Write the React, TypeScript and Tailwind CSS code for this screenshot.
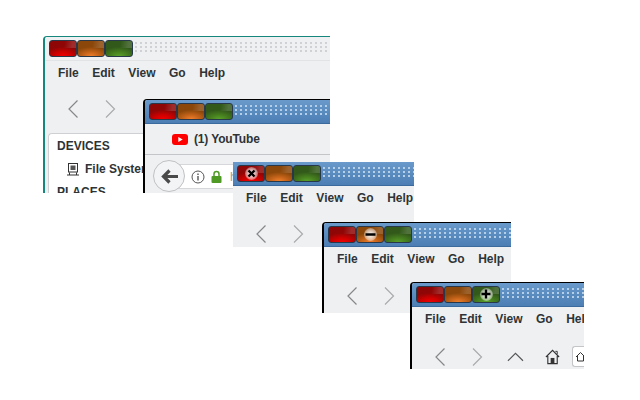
import type { ReactNode } from 'react';

type Hover = 'close' | 'min' | 'max' | null;

function TitleButton({ color, glyph }: { color: 'red' | 'orange' | 'green'; glyph?: ReactNode }) {
  const colors = {
    red: 'bg-[radial-gradient(ellipse_70%_60%_at_50%_100%,#f00000_0%,#d00000_45%,#8f0606_100%)]',
    orange: 'bg-[radial-gradient(ellipse_70%_60%_at_50%_100%,#ee7f2c_0%,#c4631a_45%,#8b4709_100%)]',
    green: 'bg-[radial-gradient(ellipse_70%_60%_at_50%_100%,#5aa02a_0%,#47801f_45%,#32591a_100%)]',
  };
  return (
    <div className={`relative flex h-[17px] w-[28px] items-center justify-center rounded-[3px] border border-[#27384a] ${colors[color]}`}>
      <div className="absolute top-0 left-0 h-[7px] w-full rounded-t-[2px] bg-[linear-gradient(100deg,#ffffff00_55%,#ffffff26_85%)]" />
      {glyph && (
        <div className="relative flex h-[13px] w-[13px] items-center justify-center rounded-full bg-[radial-gradient(circle,#ffffff_0%,#ffffff99_50%,#ffffff00_100%)]">
          {glyph}
        </div>
      )}
    </div>
  );
}

function TitleBar({ active, hover }: { active: boolean; hover: Hover }) {
  return (
    <div
      className={`flex h-[24px] shrink-0 items-center pb-[1px] pl-[4px] ${
        active
          ? 'border-b border-[#3a6a9e] bg-[linear-gradient(180deg,#6a9acb_0%,#4c7eb4_100%)]'
          : 'border-b border-[#e2e3e5] bg-[#eff0f2]'
      }`}
    >
      <TitleButton
        color="red"
        glyph={
          hover === 'close' ? (
            <svg width="9" height="9" viewBox="0 0 9 9">
              <path d="M1.500 1.500l6 6M7.500 1.500l-6 6" stroke="#000" strokeWidth="2.400" />
            </svg>
          ) : undefined
        }
      />
      <TitleButton
        color="orange"
        glyph={
          hover === 'min' ? (
            <svg width="11" height="9" viewBox="0 0 11 9">
              <path d="M0.500 4.500h10" stroke="#000" strokeWidth="2.400" />
            </svg>
          ) : undefined
        }
      />
      <TitleButton
        color="green"
        glyph={
          hover === 'max' ? (
            <svg width="10" height="10" viewBox="0 0 10 10">
              <path d="M5 0.500v9M0.500 5h9" stroke="#000" strokeWidth="2.400" />
            </svg>
          ) : undefined
        }
      />
      <div
        className={`ml-[2px] h-[12px] flex-1 bg-[length:5px_4px] ${
          active
            ? 'bg-[radial-gradient(circle_at_1px_1px,#b5cfe9_1px,transparent_1px)]'
            : 'bg-[radial-gradient(circle_at_1px_1px,#d0d1d4_1px,transparent_1px)]'
        }`}
      />
    </div>
  );
}

function MenuBar() {
  return (
    <div className="flex h-[24px] shrink-0 items-center gap-[13.500px] pl-[13px] text-[12px] font-bold whitespace-nowrap text-[#2e3436]">
      <span>File</span>
      <span>Edit</span>
      <span>View</span>
      <span>Go</span>
      <span>Help</span>
    </div>
  );
}

function BackForward() {
  return (
    <>
      <svg width="16" height="20" viewBox="0 0 16 20" fill="none">
        <path d="M12.500 1.500L4 10l8.500 8.500" stroke="#85878a" strokeWidth="1.200" />
      </svg>
      <svg width="16" height="20" viewBox="0 0 16 20" fill="none">
        <path d="M4 1.500l8.500 8.500L4 18.500" stroke="#a9abad" strokeWidth="1.200" />
      </svg>
    </>
  );
}

function Window({
  className,
  active = true,
  bare = false,
  hover = null,
  children,
}: {
  className: string;
  active?: boolean;
  bare?: boolean;
  hover?: Hover;
  children: ReactNode;
}) {
  const edge = bare
    ? ''
    : active
      ? 'rounded-tl-[4px] border-t border-l-2 border-black'
      : 'rounded-tl-[4px] border-t border-l-2 border-[#16877c]';
  return (
    <div className={`absolute flex flex-col overflow-hidden bg-[#eff0f2] ${edge} ${className}`}>
      <TitleBar active={active} hover={hover} />
      {children}
    </div>
  );
}

export default function App() {
  return (
    <div className="relative h-[400px] w-[640px] overflow-hidden bg-white font-['Liberation_Sans',sans-serif]">
      {/* file manager, not focused */}
      <Window className="top-[36px] left-[43px] h-[157px] w-[287px]" active={false}>
        <MenuBar />
        <div className="flex items-center gap-[21px] pt-[14px] pl-[20px]">
          <BackForward />
        </div>
        <div className="mt-[14px] ml-[3px] flex-1 rounded-tl-[4px] border-t border-l border-[#cfd0d3] bg-white pt-[1px] pl-[8px] text-[12px] leading-[23px] font-bold text-[#2e3436]">
          <div>DEVICES</div>
          <div className="ml-[10px] flex items-center gap-[6px]">
            <svg width="12" height="13" viewBox="0 0 12 13" fill="none">
              <rect x="1.500" y="0.500" width="9" height="8.500" stroke="#333" />
              <rect x="3.500" y="2.500" width="5" height="4.500" fill="#555" />
              <path d="M0 12h12M2.500 9.500v2.500M9.500 9.500v2.500" stroke="#333" />
            </svg>
            <span className="whitespace-nowrap">File System</span>
          </div>
          <div>PLACES</div>
        </div>
      </Window>

      {/* firefox */}
      <Window className="top-[99px] left-[143px] h-[94px] w-[187px]">
        <div className="flex h-[31px] shrink-0 items-center gap-[6px] border-b border-[#c4c5c8] pl-[27px] text-[12px] font-bold tracking-[-0.150px] text-[#2e3436]">
          <svg width="16" height="11" viewBox="0 0 16 11">
            <rect width="16" height="11" rx="3" fill="#ff0000" />
            <path d="M6.300 3v5l4.400-2.500z" fill="#fff" />
          </svg>
          <span>(1) YouTube</span>
        </div>
        <div className="relative flex-1">
          <div className="absolute top-[9px] left-[24px] flex h-[25px] w-[150px] items-center border border-[#d6d7da] bg-white pl-[21px]">
            <svg width="14" height="14" viewBox="0 0 14 14" fill="none">
              <circle cx="7" cy="7" r="6" stroke="#555" />
              <path d="M7 6v4.500M7 3.500v1.500" stroke="#555" strokeWidth="1.400" />
            </svg>
            <svg width="11" height="13" viewBox="0 0 11 13" fill="none" className="ml-[6px]">
              <path d="M3 6V4a2.500 2.500 0 015 0v2" stroke="#4f9a24" strokeWidth="1.500" />
              <rect x="0.500" y="6" width="10" height="7" rx="1" fill="#4f9a24" />
            </svg>
            <span className="ml-[8px] text-[12px] text-[#9a9b9d]">https</span>
          </div>
          <div className="absolute top-[5px] left-[8px] flex h-[32px] w-[32px] items-center justify-center rounded-full border border-[#bfc0c3] bg-[#f3f4f5]">
            <svg width="17" height="15" viewBox="0 0 17 15" fill="none">
              <path d="M8.500 1.500L2.500 7.500l6 6M3 7.500h14" stroke="#4a4a4a" strokeWidth="3.200" />
            </svg>
          </div>
        </div>
      </Window>

      {/* this one has no black edge in the shot */}
      <Window className="top-[162px] left-[233px] h-[85px] w-[181px]" bare hover="close">
        <MenuBar />
        <div className="flex items-center gap-[21px] pt-[14px] pl-[20px]">
          <BackForward />
        </div>
      </Window>

      <Window className="top-[222px] left-[322px] h-[91px] w-[189px]" hover="min">
        <MenuBar />
        <div className="flex items-center gap-[21px] pt-[15px] pl-[20px]">
          <BackForward />
        </div>
      </Window>

      <Window className="top-[282px] left-[410px] h-[87px] w-[174px]" hover="max">
        <MenuBar />
        <div className="flex items-center pt-[15px] pl-[20px]">
          <div className="flex items-center gap-[21px]">
            <BackForward />
          </div>
          <svg width="18" height="10" viewBox="0 0 18 10" fill="none" className="ml-[22px]">
            <path d="M1 9l8-8 8 8" stroke="#555" strokeWidth="1.200" />
          </svg>
          <svg width="16" height="16" viewBox="0 0 16 16" fill="none" className="ml-[21px]">
            <path d="M1 8l7-7 7 7M3 7v8h10V7" stroke="#333" strokeWidth="1.200" />
            <path d="M11 2h2v3" stroke="#333" />
            <rect x="6" y="9" width="4" height="6" fill="#333" />
          </svg>
          <div className="ml-[12px] flex h-[21px] w-[12px] shrink-0 items-center justify-start overflow-hidden rounded-l-[3px] border border-r-0 border-[#c4c5c8] bg-white pl-[2px]">
            <svg width="11" height="11" viewBox="0 0 11 11" fill="none" className="shrink-0">
              <path d="M1 6l4.500-4.500L10 6M2.500 5v5h6V5" stroke="#333" />
            </svg>
          </div>
        </div>
      </Window>
    </div>
  );
}
